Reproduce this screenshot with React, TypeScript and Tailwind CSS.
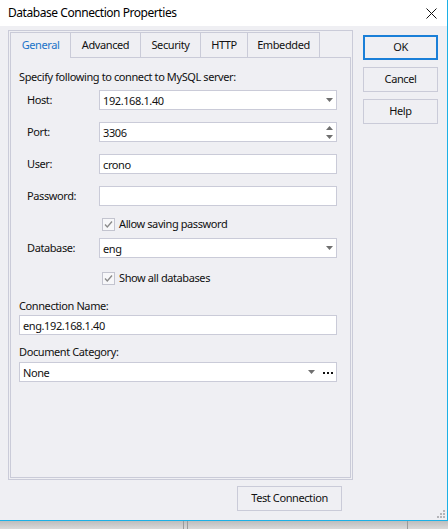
import React from "react";

function Arrow() {
  return (
    <svg width="7" height="4" viewBox="0 0 7 4" className="shrink-0">
      <path d="M0 0H7L3.5 4Z" fill="#6f6f6f" />
    </svg>
  );
}

function Spinner() {
  return (
    <div className="flex flex-col gap-[5px] shrink-0">
      <svg width="7" height="4" viewBox="0 0 7 4">
        <path d="M0 4H7L3.5 0Z" fill="#6f6f6f" />
      </svg>
      <svg width="7" height="4" viewBox="0 0 7 4">
        <path d="M0 0H7L3.5 4Z" fill="#6f6f6f" />
      </svg>
    </div>
  );
}

function Input({
  value = "",
  arrow = false,
  spinner = false,
  ellipsis = false,
}: {
  value?: string;
  arrow?: boolean;
  spinner?: boolean;
  ellipsis?: boolean;
}) {
  return (
    <div className="h-[20px] flex-1 bg-white border border-[#cacbd8] flex items-center pl-[3px] pr-[3px]">
      <span className="flex-1 leading-none">{value}</span>
      {arrow && <Arrow />}
      {spinner && <Spinner />}
      {ellipsis && (
        <div className="flex gap-[2px] ml-[8px] mt-[2px]">
          <div className="w-[2px] h-[2px] bg-[#111]" />
          <div className="w-[2px] h-[2px] bg-[#111]" />
          <div className="w-[2px] h-[2px] bg-[#111]" />
        </div>
      )}
    </div>
  );
}

function Row({ label, children, className = "" }: { label: string; children: React.ReactNode; className?: string }) {
  return (
    <div className={"flex items-center pl-[8px] " + className}>
      <div className="w-[72px]">{label}</div>
      {children}
    </div>
  );
}

function Check({ label, className = "" }: { label: string; className?: string }) {
  return (
    <div className={"flex items-center h-[20px] pl-[83px] gap-[4px] " + className}>
      <div className="w-[13px] h-[13px] border border-[#c3c4cf] bg-[#f7f7f9] flex items-center justify-center">
        <svg width="11" height="11" viewBox="0 0 11 11">
          <path d="M2 5.5L4.3 8L9 2.5" fill="none" stroke="#8a8a8a" strokeWidth="1.3" />
        </svg>
      </div>
      <span>{label}</span>
    </div>
  );
}

function Btn({ children, primary = false, className = "" }: { children: React.ReactNode; primary?: boolean; className?: string }) {
  return (
    <div
      className={
        "h-[25px] flex items-center justify-center bg-[#efeff3] " +
        (primary ? "border-2 border-[#1a7fd8] " : "border border-[#cacbd8] ") +
        className
      }
    >
      {children}
    </div>
  );
}

export default function App() {
  return (
    <div className="w-[448px] h-[529px] bg-[#cdcdcd] font-['Noto_Sans',sans-serif] text-[11px] text-[#111] tracking-[-0.4px]">
      <div className="w-[448px] h-[521px] bg-[#efeff3] border-r border-b border-[#1cb0e6] flex flex-col">
        <div className="h-[26px] bg-white flex items-center justify-between pl-[8px] pr-[10px] shrink-0">
          <span className="text-[12px] text-black tracking-[-0.45px]">Database Connection Properties</span>
          <svg width="11" height="11" viewBox="0 0 11 11">
            <path d="M0.5 0.5L10.5 10.5M10.5 0.5L0.5 10.5" stroke="#111" strokeWidth="1" />
          </svg>
        </div>
        <div className="flex-1 flex relative">
          <div className="flex flex-col ml-[8px]">
            <div className="mt-[4px] w-[345px] h-[450px] border border-[#cacbd8] p-px flex flex-col">
              <div className="h-[26px] flex shrink-0">
                <div className="w-[61px] border-t border-l border-r border-[#cacbd8] flex items-center justify-center text-[#1a73c8]">
                  General
                </div>
                <div className="w-[70px] border-t border-r border-b border-[#cacbd8] flex items-center justify-center">
                  Advanced
                </div>
                <div className="w-[60px] border-t border-r border-b border-[#cacbd8] flex items-center justify-center">
                  Security
                </div>
                <div className="w-[47px] border-t border-r border-b border-[#cacbd8] flex items-center justify-center">
                  HTTP
                </div>
                <div className="w-[72px] border-t border-r border-b border-[#cacbd8] flex items-center justify-center">
                  Embedded
                </div>
                <div className="flex-1 border-b border-[#cacbd8]" />
              </div>
              <div className="flex-1 border-l border-r border-b border-[#cacbd8] flex flex-col pl-[8px] pr-[13px]">
                <div className="mt-[11px] h-[16px] flex items-center">Specify following to connect to MySQL server:</div>
                <Row label="Host:" className="mt-[5px]">
                  <Input value="192.168.1.40" arrow />
                </Row>
                <Row label="Port:" className="mt-[12px]">
                  <Input value="3306" spinner />
                </Row>
                <Row label="User:" className="mt-[12px]">
                  <Input value="crono" />
                </Row>
                <Row label="Password:" className="mt-[12px]">
                  <Input />
                </Row>
                <Check label="Allow saving password" className="mt-[8px]" />
                <Row label="Database:" className="mt-[4px]">
                  <Input value="eng" arrow />
                </Row>
                <Check label="Show all databases" className="mt-[10px]" />
                <div className="mt-[10px] h-[16px] flex items-center">Connection Name:</div>
                <div className="mt-[1px] flex">
                  <Input value="eng.192.168.1.40" />
                </div>
                <div className="mt-[9px] h-[16px] flex items-center">Document Category:</div>
                <div className="mt-[2px] flex">
                  <Input value="None" arrow ellipsis />
                </div>
              </div>
            </div>
            <div className="flex justify-end mr-[11px] mt-[6px]">
              <Btn className="w-[105px]">Test Connection</Btn>
            </div>
          </div>
          <div className="ml-[10px] mt-[9px] flex flex-col gap-[7px] w-[75px]">
            <Btn primary>OK</Btn>
            <Btn>Cancel</Btn>
            <Btn>Help</Btn>
          </div>
          <div className="absolute right-[2px] bottom-[2px] flex flex-col items-end gap-px">
            <div className="flex gap-px">
              <div className="w-[2px] h-[2px] bg-[#b4b4b8]" />
            </div>
            <div className="flex gap-px">
              <div className="w-[2px] h-[2px] bg-[#b4b4b8]" />
              <div className="w-[2px] h-[2px] bg-[#b4b4b8]" />
            </div>
            <div className="flex gap-px">
              <div className="w-[2px] h-[2px] bg-[#b4b4b8]" />
              <div className="w-[2px] h-[2px] bg-[#b4b4b8]" />
              <div className="w-[2px] h-[2px] bg-[#b4b4b8]" />
            </div>
          </div>
        </div>
      </div>
      <div className="h-[8px] flex bg-gradient-to-b from-[#bdbdbd] to-[#d9d9d9]">
        <div className="w-[183px]" />
        <div className="w-[5px] border-l border-r border-[#9a9a9a]" />
        <div className="w-[220px] border-r border-[#9a9a9a]" />
      </div>
    </div>
  );
}
